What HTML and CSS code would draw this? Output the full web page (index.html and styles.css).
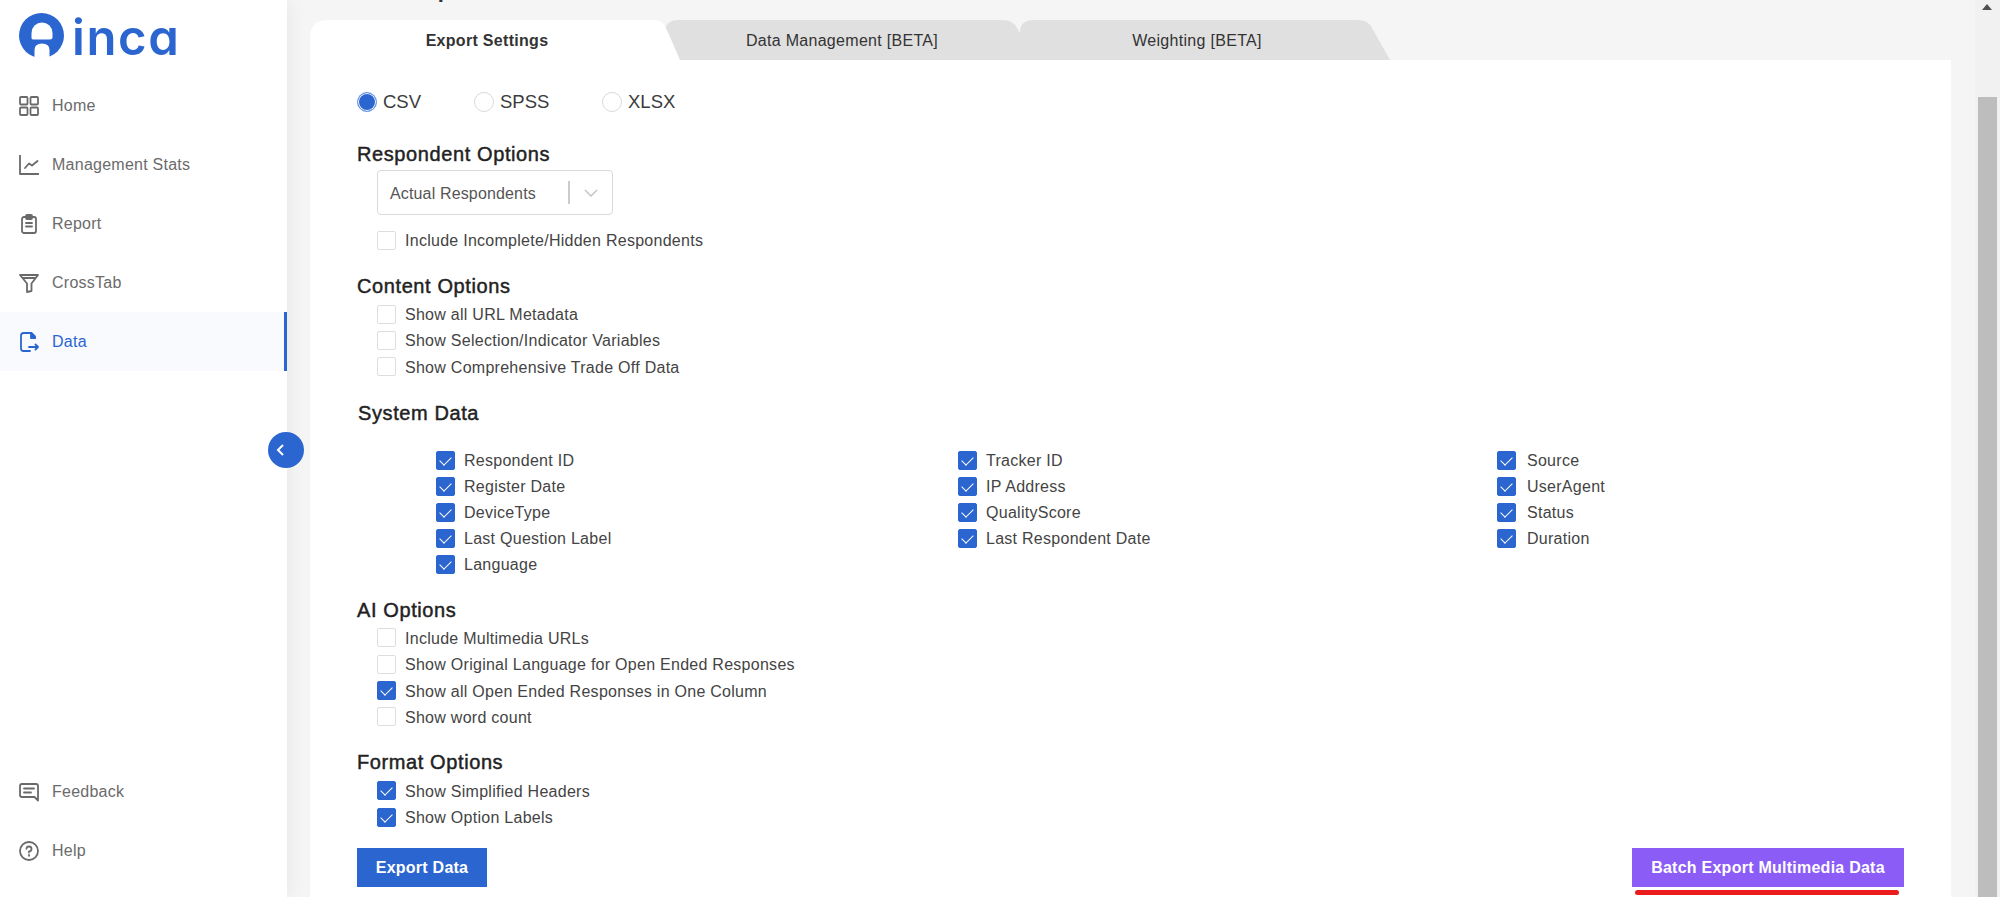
FILE: index.html
```html
<!DOCTYPE html>
<html lang="en">
<head>
<meta charset="utf-8">
<title>Data Export</title>
<link rel="stylesheet" href="styles.css">
</head>
<body>
<div class="app">
  <aside class="sidebar">
    <div class="logo">
      <svg class="logo-mark" viewBox="0 0 45 45" width="45" height="45" aria-hidden="true">
        <circle cx="22.5" cy="22.5" r="22.5" fill="#2b65d0"/>
        <path d="M12.5 25 V20 a10.5 10.5 0 0 1 21 0 V25 Q33 26.5 30 26.5 H15.5 Q12.5 26.5 12.5 25 Z" fill="#fff"/>
        <path d="M15.5 45 V37 Q15.5 30.5 23 30.5 Q30.5 30.5 30.5 37 V45 Z" fill="#fff"/>
      </svg>
      <span class="logo-text">inca</span>
    </div>
    <nav class="nav">
      <a class="nav-item"><svg class="icon" viewBox="0 0 20 20"><rect x="1" y="1" width="7.5" height="7.5" rx="1"/><rect x="11.5" y="1" width="7.5" height="7.5" rx="1"/><rect x="1" y="11.5" width="7.5" height="7.5" rx="1"/><rect x="11.5" y="11.5" width="7.5" height="7.5" rx="1"/></svg>Home</a>
      <a class="nav-item"><svg class="icon" viewBox="0 0 20 20"><path d="M1 0.5 V19 H19.5"/><path d="M6 13 L10 8.5 L13 10.5 L18.5 6"/></svg>Management Stats</a>
      <a class="nav-item"><svg class="icon" viewBox="0 0 20 20"><rect x="3" y="3" width="14" height="16" rx="2"/><rect x="7" y="1" width="6" height="4" rx="1"/><path d="M7 9 H13 M7 12.5 H13"/></svg>Report</a>
      <a class="nav-item"><svg class="icon" viewBox="0 0 20 20"><path d="M1 2 H19 L12.5 10.5 V18 L8 19 V10.5 Z"/><path d="M4 5 H16"/></svg>CrossTab</a>
      <a class="nav-item is-active"><svg class="icon" viewBox="0 0 20 20"><path d="M16 6 V4.5 L12.5 1 H4.5 Q2 1 2 3.5 V16.5 Q2 19 4.5 19 H11"/><path class="icon-fold" d="M12 1.5 V6 H16 Z"/><path d="M10 15 H19 M16.5 12.5 L19 15 L16.5 17.5"/></svg>Data</a>
    </nav>
    <nav class="nav nav-bottom">
      <a class="nav-item"><svg class="icon" viewBox="0 0 20 20"><path d="M3 2 H17 Q19 2 19 4 V18.5 L15.5 15 H3 Q1 15 1 13 V4 Q1 2 3 2 Z"/><path d="M5 6.5 H15 M5 10.5 H12"/></svg>Feedback</a>
      <a class="nav-item"><svg class="icon" viewBox="0 0 20 20"><circle cx="10" cy="10" r="9"/><path d="M7.5 7.8 A2.5 2.5 0 1 1 10 10.5 V11.5"/><path d="M10 14 V14.8"/></svg>Help</a>
    </nav>
    <button class="collapse" type="button" aria-label="Collapse sidebar"><svg viewBox="0 0 12 12" width="12" height="12"><path d="M8 1 L3 6 L8 11"/></svg></button>
  </aside>

  <main class="main">
    <h1 class="page-title">Data Export</h1>
    <div class="tabs">
      <div class="tab tab-active">Export Settings</div>
      <div class="tab tab-second">Data Management [BETA]</div>
      <div class="tab tab-third">Weighting [BETA]</div>
    </div>
    <section class="card">
      <div class="formats">
        <label class="format format-csv"><span class="radio is-on"></span>CSV</label>
        <label class="format format-spss"><span class="radio"></span>SPSS</label>
        <label class="format"><span class="radio"></span>XLSX</label>
      </div>

      <h2 class="title title-first">Respondent Options</h2>
      <div class="select">
        <span class="select-value">Actual Respondents</span>
        <span class="select-sep"></span>
        <svg class="select-arrow" viewBox="0 0 14 8" width="14" height="8"><path d="M1 1 L7 7 L13 1"/></svg>
      </div>
      <div class="rows rows-after-select">
        <label class="row"><span class="box"></span>Include Incomplete/Hidden Respondents</label>
      </div>

      <h2 class="title">Content Options</h2>
      <div class="rows">
        <label class="row"><span class="box"></span>Show all URL Metadata</label>
        <label class="row"><span class="box"></span>Show Selection/Indicator Variables</label>
        <label class="row"><span class="box"></span>Show Comprehensive Trade Off Data</label>
      </div>

      <h2 class="title title-system">System Data</h2>
      <div class="system-grid">
        <label class="row"><span class="box is-on"></span>Respondent ID</label>
        <label class="row"><span class="box is-on"></span>Tracker ID</label>
        <label class="row"><span class="box is-on"></span>Source</label>
        <label class="row"><span class="box is-on"></span>Register Date</label>
        <label class="row"><span class="box is-on"></span>IP Address</label>
        <label class="row"><span class="box is-on"></span>UserAgent</label>
        <label class="row"><span class="box is-on"></span>DeviceType</label>
        <label class="row"><span class="box is-on"></span>QualityScore</label>
        <label class="row"><span class="box is-on"></span>Status</label>
        <label class="row"><span class="box is-on"></span>Last Question Label</label>
        <label class="row"><span class="box is-on"></span>Last Respondent Date</label>
        <label class="row"><span class="box is-on"></span>Duration</label>
        <label class="row"><span class="box is-on"></span>Language</label>
      </div>

      <h2 class="title">AI Options</h2>
      <div class="rows">
        <label class="row"><span class="box"></span>Include Multimedia URLs</label>
        <label class="row"><span class="box"></span>Show Original Language for Open Ended Responses</label>
        <label class="row"><span class="box is-on"></span>Show all Open Ended Responses in One Column</label>
        <label class="row"><span class="box"></span>Show word count</label>
      </div>

      <h2 class="title title-format">Format Options</h2>
      <div class="rows rows-format">
        <label class="row"><span class="box is-on"></span>Show Simplified Headers</label>
        <label class="row"><span class="box is-on"></span>Show Option Labels</label>
      </div>

      <div class="actions">
        <button class="btn btn-blue" type="button">Export Data</button>
        <button class="btn btn-purple" type="button">Batch Export Multimedia Data<span class="annotation"></span></button>
      </div>
    </section>
  </main>

  <div class="scrollbar">
    <span class="scroll-up"></span>
    <span class="scroll-thumb"></span>
  </div>
</div>
</body>
</html>
```

FILE: styles.css
```css
* { box-sizing: border-box; }
html, body { margin: 0; height: 100%; overflow: hidden; }
body {
  background: #f5f5f5;
  font-family: "Liberation Sans", Arial, sans-serif;
  color: #333;
}
.app { display: flex; height: 897px; }

/* Sidebar */
.sidebar {
  position: relative;
  flex: 0 0 287px;
  display: flex;
  flex-direction: column;
  background: #fff;
  box-shadow: 2px 0 18px rgba(0, 0, 0, .06);
  z-index: 1;
}
.logo {
  display: flex;
  align-items: center;
  gap: 8px;
  height: 46px;
  margin: 12px 0 18px 19px;
}
.logo-text {
  font-family: Inter, sans-serif;
  font-feature-settings: "cv11" 1;
  font-weight: 600;
  font-size: 49px;
  line-height: 46px;
  letter-spacing: 1.6px;
  color: #2b65d0;
  position: relative;
  top: 3px;
}
.nav { display: flex; flex-direction: column; }
.nav-bottom { margin-top: auto; margin-bottom: 17px; }
.nav-item {
  display: flex;
  align-items: center;
  gap: 13px;
  height: 59px;
  padding-left: 19px;
  font-size: 16px;
  letter-spacing: .25px;
  color: #6b6b6b;
}
.icon {
  flex: 0 0 20px;
  width: 20px;
  height: 20px;
  fill: none;
  stroke: #6a6a6a;
  stroke-width: 1.8;
  stroke-linejoin: round;
  stroke-linecap: round;
}
.nav-item.is-active {
  color: #2b65d0;
  background: #f8fafe;
  border-right: 3px solid #2b65d0;
}
.nav-item.is-active .icon { stroke: #2b65d0; }
.nav-item.is-active .icon-fold { fill: #2b65d0; }
.collapse {
  position: absolute;
  top: 432px;
  left: 268px;
  width: 36px;
  height: 36px;
  padding: 0 10px 0 0;
  border: 0;
  border-radius: 50%;
  background: #2b65d0;
  display: flex;
  align-items: center;
  justify-content: center;
}
.collapse svg { fill: none; stroke: #fff; stroke-width: 2; }

/* Main */
.main {
  flex: 1;
  min-width: 0;
  padding: 0 24px 0 23px;
  display: flex;
  flex-direction: column;
}
.page-title {
  margin: -23px 0 17px 47px;
  font-size: 22px;
  line-height: 26px;
  font-weight: 700;
  color: #333;
}
.tabs { display: flex; height: 40px; }
.tab {
  flex: none;
  height: 40px;
  padding: 2px 16px 0 0;
  display: flex;
  align-items: center;
  justify-content: center;
  font-size: 16px;
  letter-spacing: .3px;
  background: #e0e0e0;
  color: #333;
}
.tab-active {
  position: relative;
  z-index: 2;
  width: 370px;
  background: #fff;
  font-weight: 700;
  clip-path: path("M0 40 V18 Q0 0 18 0 H345 Q352 0 356 8 L370 40 Z");
}
.tab-second {
  position: relative;
  z-index: 1;
  width: 370px;
  margin-left: -15px;
  clip-path: path("M0 40 V12 Q0 0 14 0 H338 Q348 0 352 8 L370 40 Z");
}
.tab-third {
  width: 370px;
  margin-left: -15px;
  clip-path: path("M0 40 V12 Q0 0 14 0 H338 Q348 0 352 8 L370 40 Z");
}
.card {
  flex: 1;
  background: #fff;
  padding: 30px 47px 0;
  position: relative;
}
.formats { display: flex; height: 24px; align-items: center; }
.format {
  display: flex;
  align-items: center;
  gap: 6px;
  font-size: 18.5px;
  line-height: 24px;
  color: #3c3c3c;
}
.format-csv { width: 117px; }
.format-spss { width: 128px; }
.radio {
  width: 20px;
  height: 20px;
  border-radius: 50%;
  background: #fff;
  border: 1.5px solid #d9d9d9;
}
.radio.is-on {
  background: #2b65d0;
  border-color: #6f9ae6;
  box-shadow: inset 0 0 0 1px #fff;
}
.title {
  margin: 19.5px 0 0;
  font-size: 20px;
  line-height: 26px;
  font-weight: 400;
  letter-spacing: .6px;
  color: #222;
  -webkit-text-stroke: .45px #222;
}
.title-first { margin-top: 27px; }
.title-system { margin-left: 1px; }
.title-format { margin-top: 18.5px; }
.select {
  display: flex;
  align-items: center;
  width: 236px;
  height: 45px;
  margin: 3px 0 0 20px;
  padding-left: 12px;
  border: 1.5px solid #d9d9d9;
  border-radius: 4px;
  font-size: 16px;
  color: #555;
}
.select-value { width: 178px; padding-top: 3px; letter-spacing: .15px; }
.select-sep { width: 1.5px; height: 23px; background: #ccc; }
.select-arrow { margin-left: 14px; fill: none; stroke: #c4c4c4; stroke-width: 1.5; }
.rows { margin-top: 2px; padding-left: 20px; }
.rows-after-select { margin-top: 12px; }
.rows-format { margin-top: 3px; }
.row {
  display: flex;
  align-items: center;
  gap: 9px;
  height: 26.4px;
  padding-top: 2px;
  font-size: 16px;
  letter-spacing: .27px;
  color: #444;
}
.box {
  position: relative;
  flex: 0 0 19px;
  width: 19px;
  height: 19px;
  margin-top: -2px;
  border: 1.5px solid #dedede;
  border-radius: 2px;
  background: #fff;
}
.box.is-on { background: #2b65d0; border-color: #2b65d0; }
.box.is-on::after {
  content: "";
  position: absolute;
  left: 3px;
  top: 1px;
  width: 10px;
  height: 6px;
  border-left: 1.6px solid #fff;
  border-bottom: 1.6px solid #fff;
  transform: translateY(3px) rotate(-45deg) scale(1, .95);
}
.system-grid {
  display: grid;
  grid-template-columns: 522px 539px 1fr;
  grid-auto-rows: 26px;
  margin-top: 21.5px;
  padding-left: 79px;
}
.system-grid .row { height: 26px; }
.system-grid .row:nth-child(3n) { gap: 11px; }
.actions {
  display: flex;
  justify-content: space-between;
  margin: 18px 0 0;
}
.btn {
  position: relative;
  height: 39px;
  padding: 0;
  border: 0;
  color: #fff;
  font: 700 16px "Liberation Sans", Arial, sans-serif;
  letter-spacing: .25px;
}
.btn-blue { width: 130px; background: #2b65d0; }
.btn-purple { width: 272px; background: #8b5cf6; }
.annotation {
  position: absolute;
  left: 3px;
  right: 5px;
  top: 42px;
  height: 5px;
  border-radius: 3px;
  background: #ea1c1c;
}

/* Scrollbar */
.scrollbar {
  position: relative;
  flex: 0 0 25px;
  background: #f1f1f1;
}
.scroll-up {
  position: absolute;
  top: 4px;
  left: 7px;
  width: 0;
  height: 0;
  border-left: 5.5px solid transparent;
  border-right: 5.5px solid transparent;
  border-bottom: 6px solid #505050;
}
.scroll-thumb {
  position: absolute;
  top: 97px;
  bottom: 0;
  left: 3px;
  right: 3px;
  background: #bdbdbd;
}
```
